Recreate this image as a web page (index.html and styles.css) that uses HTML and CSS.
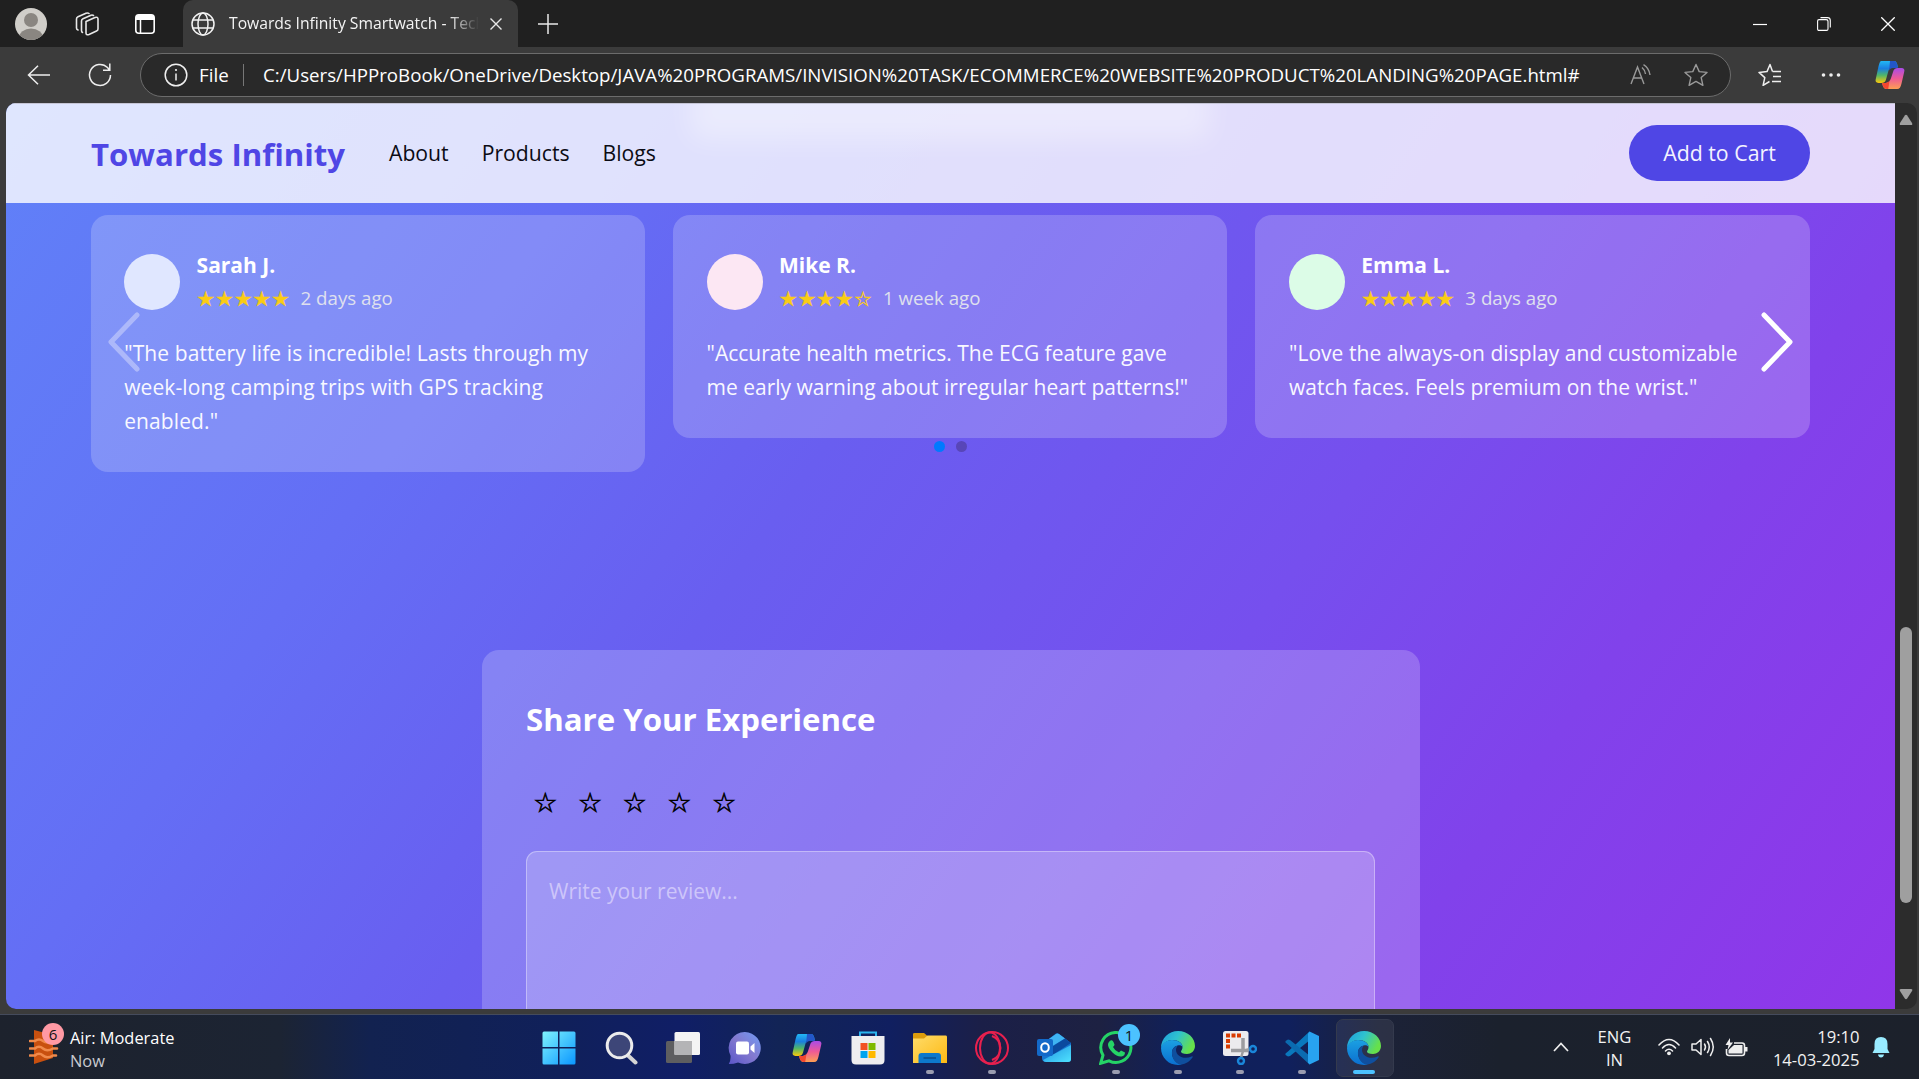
FILE: index.html
```html
<!DOCTYPE html>
<html lang="en">
<head>
<meta charset="utf-8">
<title>Towards Infinity Smartwatch</title>
<link rel="stylesheet" href="styles.css">
</head>
<body>
<svg class="defs" width="0" height="0">
  <defs>
    <linearGradient id="cpA" x1="0" y1="0" x2="0" y2="1"><stop offset="0" stop-color="#22b8f5"/><stop offset=".35" stop-color="#1a7fe0"/><stop offset=".65" stop-color="#4fb66a"/><stop offset="1" stop-color="#fbc90b"/></linearGradient>
    <linearGradient id="cpB" x1="0" y1="0" x2="0" y2="1"><stop offset="0" stop-color="#a94be8"/><stop offset=".5" stop-color="#ee5a96"/><stop offset="1" stop-color="#fda052"/></linearGradient>
    <linearGradient id="win" x1="0" y1="0" x2="1" y2="1"><stop offset="0" stop-color="#7ff3ff"/><stop offset="1" stop-color="#0a96ff"/></linearGradient>
    <linearGradient id="chat" x1="1" y1="0" x2="0" y2="1"><stop offset="0" stop-color="#6f9cf5"/><stop offset=".5" stop-color="#8379cf"/><stop offset="1" stop-color="#5a55c9"/></linearGradient>
    <linearGradient id="folder" x1="0" y1="0" x2="1" y2="1"><stop offset="0" stop-color="#ffdc6a"/><stop offset="1" stop-color="#fdb913"/></linearGradient>
    <linearGradient id="edgeTop" x1="0" y1="0" x2="1" y2=".4"><stop offset="0" stop-color="#1c9bde"/><stop offset=".5" stop-color="#2fc2cf"/><stop offset="1" stop-color="#66e04b"/></linearGradient>
    <linearGradient id="edgeLow" x1="0" y1="0" x2="0" y2="1"><stop offset="0" stop-color="#1ba0e2"/><stop offset="1" stop-color="#0b6fd0"/></linearGradient>
    <linearGradient id="ol" x1="0" y1="0" x2="1" y2="1"><stop offset="0" stop-color="#1f8fe0"/><stop offset="1" stop-color="#4fe3ff"/></linearGradient>
    <symbol id="copilot" viewBox="0 0 34 34">
      <path d="M7 1H21C24 1 25 3 26 8H20C17 8 16 10 15 13L12.500 22C11.500 25 10 26 7 26H4C1 26 0 24 1 21L4 7C5 3 6 1 7 1Z" fill="url(#cpA)"/>
      <path d="M17 1H21C24 1 25 3 26 9H20C18 9 17 10 16 12Z" fill="#2356c9"/>
      <path d="M26 9H30C33 9 34 11 33 14L30 27C29 31 28 33 25 33H14C10 33 9 30 8 26H12C15 26 17 24 18 21L21 12C22 10 23 9 26 9Z" fill="url(#cpB)"/>
      <path d="M8 26H12C14 26 15.500 25 16.500 23L15 33C11 33 9 31 8 26Z" fill="#f4472f"/>
    </symbol>
    <symbol id="edge" viewBox="0 0 34 34">
      <path d="M0 17C0 7 8 0 17 0C27 0 34 7 34 15C34 20 30 23 26 23C22 23 20 22 20 20.500C20 19.500 21.500 19 21.500 16C21.500 12 17 9 12 9C6 9 2 12 0 17Z" fill="url(#edgeTop)"/>
      <path d="M0 17C1 12 6 9 11 9C17 9 21.500 12 21.500 16C21 14.500 19 14 17.500 14.200C13 15 11 18 11 22C11 28 16 33 21 33.500C10 36 0 28 0 17Z" fill="url(#edgeLow)"/>
      <path d="M17 14.500C13 15.500 10.500 18.500 11 23C11.500 29 16 33.500 20 33.600C25 33 29 30 31.500 26.500C32 25.500 31.500 25 30.500 25.500C23 29 15 25 15 19C15 17 16 15.500 17 14.500Z" fill="#0f4f9e"/>
    </symbol>
  </defs>
</svg>

<div class="screen">
  <div class="tabstrip">
    <div class="tab-tools">
      <svg class="avatar-ico" viewBox="0 0 32 32"><clipPath id="av"><circle cx="16" cy="16" r="16"/></clipPath><g clip-path="url(#av)"><rect width="32" height="32" fill="#d0cec9"/><circle cx="16" cy="12" r="7" fill="#8a8681"/><ellipse cx="16" cy="30" rx="12" ry="9.500" fill="#8a8681"/></g></svg>
      <svg class="ico24" viewBox="0 0 24 24"><g fill="none" stroke="#e8e8e8" stroke-width="1.600" stroke-linejoin="round" stroke-linecap="round"><path d="M11 9.500L20 5.500Q23 4.500 23 7V17Q23 18.500 21.500 19L14 22.500Q11 23.500 11 21Z"/><path d="M7.500 20.500Q6.500 20 6.500 18.500V9Q6.500 7.500 8 6.800L16 3.200Q17.500 2.800 18.500 3.500"/><path d="M3 18Q1.500 17.500 1.500 16V7Q1.500 5.500 3 4.800L11 1.300Q13 .7 14 1.500"/></g></svg>
      <svg class="ico20" viewBox="0 0 20 20"><rect x=".8" y=".8" width="18.400" height="18.400" rx="3" fill="none" stroke="#fff" stroke-width="1.600"/><path d="M1 3Q1 1 3 1H17Q19 1 19 3V6H1Z" fill="#fff"/><path d="M5.500 6V19" stroke="#fff" stroke-width="1.500"/></svg>
    </div>
    <div class="tab">
      <svg class="globe" viewBox="0 0 24 24"><g fill="none" stroke="#f2f2f2" stroke-width="1.500"><circle cx="12" cy="12" r="11"/><ellipse cx="12" cy="12" rx="5" ry="11"/><path d="M2 8H22M2 16H22"/></g></svg>
      <span class="tab-title">Towards Infinity Smartwatch - Tech</span>
      <svg class="ico12" viewBox="0 0 12 12"><path d="M.5 .5L11.500 11.500M11.500 .5L.5 11.500" stroke="#e8e8e8" stroke-width="1.400"/></svg>
    </div>
    <svg class="ico20 plus" viewBox="0 0 20 20"><path d="M10 0V20M0 10H20" stroke="#e8e8e8" stroke-width="1.500"/></svg>
    <div class="win-controls">
      <svg viewBox="0 0 14 14"><path d="M0 7.500H14" stroke="#fff" stroke-width="1.200"/></svg>
      <svg viewBox="0 0 14 14"><path d="M.6 4Q.6 2.600 2 2.600H9Q11 2.600 11 4.500V12Q11 13.400 9.600 13.400H2Q.6 13.400 .6 12Z" fill="none" stroke="#fff" stroke-width="1.100"/><path d="M3.500 .6H10.500Q13.300 .6 13.300 3.500V10.500" fill="none" stroke="#fff" stroke-width="1.100"/></svg>
      <svg viewBox="0 0 14 14"><path d="M.3 .3L13.700 13.700M13.700 .3L.3 13.700" stroke="#fff" stroke-width="1.300"/></svg>
    </div>
  </div>

  <div class="toolbar">
    <svg class="back" viewBox="0 0 24 20"><path d="M23 10H1.500M11 .7L1.500 10L11 19.300" fill="none" stroke="#eee" stroke-width="1.500"/></svg>
    <svg class="reload" viewBox="0 0 24 24"><path d="M22.500 12A10.500 10.500 0 1 1 19.500 4.600L21.500 7M21.800 .5V7.200H15" fill="none" stroke="#eee" stroke-width="1.500"/></svg>
    <div class="urlbar">
      <svg class="ico24" viewBox="0 0 24 24"><circle cx="12" cy="12" r="10.800" fill="none" stroke="#eee" stroke-width="1.500"/><path d="M12 10.500V17.500" stroke="#eee" stroke-width="1.500"/><circle cx="12" cy="7" r="1.100" fill="#eee"/></svg>
      <span class="file">File</span>
      <span class="sep"></span>
      <span class="url">C:/Users/HPProBook/OneDrive/Desktop/JAVA%20PROGRAMS/INVISION%20TASK/ECOMMERCE%20WEBSITE%20PRODUCT%20LANDING%20PAGE.html#</span>
      <svg class="aloud" viewBox="0 0 22 22"><g fill="none" stroke="#9a9a9a" stroke-width="1.400"><path d="M1 20L7.500 3L14 20M3.300 14H11.700"/><path d="M12 3.500Q15 6 15.500 10"/><path d="M13.500 .7Q19 4 20 11"/></g></svg>
      <svg class="ico24" viewBox="0 0 24 24"><path d="M12 1.500L15.200 8.600L23 9.400L17.200 14.600L18.900 22.300L12 18.400L5.100 22.300L6.800 14.600L1 9.400L8.800 8.600Z" fill="none" stroke="#9a9a9a" stroke-width="1.400" stroke-linejoin="round"/></svg>
    </div>
    <svg class="ico24 fav" viewBox="0 0 24 24"><path d="M14.500 8.500L12 1.500L9 8.600L1 9.400L6.800 14.600L5.100 22.300L11.500 18.500M14.500 8.500H23M15 13.500H23M14 18.500H23" fill="none" stroke="#eee" stroke-width="1.500" stroke-linejoin="round"/></svg>
    <svg class="dots3" viewBox="0 0 20 6"><g fill="#eee"><circle cx="2.500" cy="3" r="1.800"/><circle cx="10" cy="3" r="1.800"/><circle cx="17.500" cy="3" r="1.800"/></g></svg>
    <svg class="copilot-top"><use href="#copilot"/></svg>
  </div>

  <div class="viewport">
    <div class="page">
      <header class="nav">
        <div class="ghost"></div>
        <span class="brand">Towards Infinity</span>
        <nav class="links"><a>About</a><a>Products</a><a>Blogs</a></nav>
        <button class="cart">Add to Cart</button>
      </header>
      <section class="reviews">
        <article class="card">
          <div class="who"><span class="face indigo"></span><div><h4>Sarah J.</h4><p class="meta"><span class="stars">★★★★★</span><span class="when">2 days ago</span></p></div></div>
          <p class="quote loose">"The battery life is incredible! Lasts through my<br>week-long camping trips with GPS tracking<br>enabled."</p>
        </article>
        <article class="card">
          <div class="who"><span class="face pink"></span><div><h4>Mike R.</h4><p class="meta"><span class="stars">★★★★☆</span><span class="when">1 week ago</span></p></div></div>
          <p class="quote">"Accurate health metrics. The ECG feature gave<br>me early warning about irregular heart patterns!"</p>
        </article>
        <article class="card">
          <div class="who"><span class="face green"></span><div><h4>Emma L.</h4><p class="meta"><span class="stars">★★★★★</span><span class="when">3 days ago</span></p></div></div>
          <p class="quote semi">"Love the always-on display and customizable<br>watch faces. Feels premium on the wrist."</p>
        </article>
        <svg class="arrow prev" viewBox="0 0 32 60"><path d="M29 3L3 30L29 57"/></svg>
        <svg class="arrow next" viewBox="0 0 32 60"><path d="M3 3L29 30L3 57"/></svg>
        <div class="bullets"><i class="on"></i><i></i></div>
      </section>
      <section class="form">
        <h3>Share Your Experience</h3>
        <div class="rate"><span>☆</span><span>☆</span><span>☆</span><span>☆</span><span>☆</span></div>
        <div class="area">Write your review...</div>
      </section>
    </div>
    <div class="scroll">
      <svg viewBox="0 0 14 12"><path d="M5.800 1.500Q7 0 8.200 1.500L13 9Q14 11 12 11H2Q0 11 1 9Z" fill="#a0a0a0"/></svg>
      <span class="thumb"></span>
      <svg viewBox="0 0 14 12"><path d="M5.800 10.500Q7 12 8.200 10.500L13 3Q14 1 12 1H2Q0 1 1 3Z" fill="#a0a0a0"/></svg>
    </div>
  </div>

  <div class="taskbar">
    <div class="widget">
      <div class="air">
        <svg viewBox="0 0 30 34"><path d="M5 0L24 5V28L5 34Z" fill="#c8500f"/><g fill="none" stroke="#f08a4b" stroke-width="2.600" stroke-linecap="round"><path d="M1 11H6Q10 8 14 11T24 11H27"/><path d="M1 18.500H6Q10 15 14 18.500T24 18.500H28"/><path d="M1 25.500H6Q10 22 14 25.500T24 25.500H27"/></g></svg>
        <span class="num">6</span>
      </div>
      <div class="air-text"><span>Air: Moderate</span><span class="dim">Now</span></div>
    </div>
    <div class="apps">
      <div class="app"><svg viewBox="0 0 34 34"><path d="M2 .5H16V16H.5V2Q.5 .5 2 .5ZM17.500 .5H32Q33.500 .5 33.500 2V16H17.500ZM.5 17.500H16V33.500H2Q.5 33.500 .5 32ZM17.500 17.500H33.500V32Q33.500 33.500 32 33.500H17.500Z" fill="url(#win)"/></svg></div>
      <div class="app"><svg viewBox="0 0 34 34"><path d="M23.500 24L31.500 31.500" stroke="#d5d5d5" stroke-width="4" stroke-linecap="round"/><circle cx="15.500" cy="14.500" r="12.300" fill="#3d4678" stroke="#ececec" stroke-width="3"/></svg></div>
      <div class="app"><svg viewBox="0 0 34 34"><rect x="0" y="10" width="26" height="22" rx="1.500" fill="#5e5e60"/><rect x="8.500" y="1" width="25.500" height="23" rx="1.500" fill="#f4f4f4"/><path d="M8.500 10H26V24H8.500Z" fill="#b4b4b6"/></svg></div>
      <div class="app"><svg viewBox="0 0 34 34"><path d="M17 1A16 16 0 1 1 10 31.500Q6 33 .8 33Q3 29 2.500 24.500A16 16 0 0 1 17 1Z" fill="url(#chat)"/><rect x="8" y="10.500" width="13" height="13" rx="2" fill="#fff"/><path d="M22.500 15.500L26.500 12V22L22.500 18.500Z" fill="#fff"/></svg></div>
      <div class="app"><svg class="cp"><use href="#copilot"/></svg></div>
      <div class="app"><svg viewBox="0 0 34 34"><path d="M9 7V1.500H25V7" fill="none" stroke="#2bb5ef" stroke-width="2"/><path d="M.5 5H33.500V29Q33.500 33.500 29 33.500H5Q.5 33.500 .5 29Z" fill="#eeedf0"/><path d="M9.500 12H16.500V19H9.500Z" fill="#f25022"/><path d="M17.500 12H24.500V19H17.500Z" fill="#7fba00"/><path d="M9.500 20H16.500V27H9.500Z" fill="#00a4ef"/><path d="M17.500 20H24.500V27H17.500Z" fill="#ffb900"/></svg></div>
      <div class="app run"><svg viewBox="0 0 34 34"><path d="M0 3Q0 2 1.500 2H11L14.500 5V12H0Z" fill="#dd9c0c"/><path d="M0 7.500H11L14.500 4.500H33Q34 4.500 34 6V32H0Z" fill="url(#folder)"/><path d="M5.500 32V25Q5.500 22 8.500 22H25Q28 22 28 25V32Z" fill="#0d78cc"/><path d="M10.500 27H23" stroke="#0b4f8f" stroke-width="1.500"/></svg></div>
      <div class="app run"><svg viewBox="0 0 34 34"><g fill="none" stroke="#e8204e" stroke-width="2"><circle cx="17" cy="17" r="16"/><ellipse cx="15" cy="17" rx="10" ry="15.500"/><path d="M17 5Q25 8 25.500 17Q25 26 17 29"/></g></svg></div>
      <div class="app"><svg viewBox="0 0 34 34"><path d="M5 13L19 2.500Q20.500 2 22 3L34 12V28Q34 31 31 31H9Q5 31 5 27Z" fill="#1674cf"/><path d="M12 8L19 3Q20.500 2 22 3L28 7.500L12 17Z" fill="#3fb4f2"/><path d="M10 19L28 7.500L34 12L14 25Z" fill="#0b4a9f"/><path d="M34 14V28Q34 31 31 31H9Q7 31 6 29Z" fill="url(#ol)"/><rect x="0" y="8" width="16" height="17" rx="2" fill="#1369c9"/><ellipse cx="8" cy="16.500" rx="3.800" ry="4.300" fill="none" stroke="#fff" stroke-width="2"/></svg></div>
      <div class="app run"><svg viewBox="0 0 34 34"><path d="M17.500 1.500A15 15 0 1 1 10 29.800L1.700 32.300L4 24.200A15 15 0 0 1 17.500 1.500Z" fill="none" stroke="#25d366" stroke-width="3"/><path d="M11.500 9.500Q13.500 8.500 14.500 11L15.500 13.500Q15.500 14.500 14 16Q16 20 20 21.500L22 19.500L26 21.500Q26 25 22.500 25.500Q18 26 13.500 21.500Q8.500 16.500 9 13Q9.500 10.500 11.500 9.500Z" fill="#25d366"/></svg><span class="count">1</span></div>
      <div class="app run"><svg><use href="#edge"/></svg></div>
      <div class="app run"><svg viewBox="0 0 34 34"><rect x="0" y="0" width="25.500" height="25" rx="2.500" fill="#ecebee"/><path d="M3 2.500H7V6.500H3ZM8.500 2.500H12.500V6.500H8.500ZM14 2.500H18V6.500H14ZM3 8H7V12H3ZM3 13.500H7V17.500H3Z" fill="#d83b01"/><path d="M20 7V20M8 19.500H25" stroke="#9c9ca0" stroke-width="3.500"/><path d="M20 20L18 27M22 19.500L27 18" stroke="#9c9ca0" stroke-width="2.500"/><circle cx="18" cy="30" r="3" fill="none" stroke="#1a86d9" stroke-width="2.400"/><circle cx="30" cy="18" r="3" fill="none" stroke="#1a86d9" stroke-width="2.400"/></svg></div>
      <div class="app run"><svg viewBox="0 0 34 34"><path d="M24.500 .5L3.500 20L.5 22.500V24L3 25.500L5 25L25 9Z" fill="#0a78bd"/><path d="M24.500 33.500L3.500 14L.5 11.500V10L3 8.500L5 9L25 25Z" fill="#0b6bb0"/><path d="M24.500 .5L34 5V29L24.500 33.500L23 31.500V2.500Z" fill="#28a3f0"/></svg></div>
      <div class="app run active"><svg><use href="#edge"/></svg></div>
    </div>
    <div class="tray">
      <svg class="chev" viewBox="0 0 16 10"><path d="M1 9L8 1.500L15 9" fill="none" stroke="#eee" stroke-width="1.700"/></svg>
      <div class="lang"><span>ENG</span><span>IN</span></div>
      <svg class="wifi" viewBox="0 0 22 18"><g fill="none" stroke="#eee" stroke-width="1.600" stroke-linecap="round"><path d="M1 7Q11 -4 21 7"/><path d="M4.500 10Q11 3 17.500 10"/><path d="M7.500 13Q11 9.500 14.500 13"/></g><circle cx="11" cy="15.300" r="1.900" fill="#eee"/></svg>
      <svg class="sound" viewBox="0 0 24 20"><g fill="none" stroke="#eee" stroke-width="1.500" stroke-linecap="round" stroke-linejoin="round"><path d="M1 7H5L10 2.500V17.500L5 13H1Z"/><path d="M13.500 7Q15.500 10 13.500 13"/><path d="M16.500 4.500Q20 10 16.500 15.500"/><path d="M19.500 1.500Q25 10 19.500 18.500"/></g></svg>
      <svg class="batt" viewBox="0 0 23 19"><path d="M9 5H17Q19.500 5 19.500 7.500V15Q19.500 17.500 17 17.500H4Q1.500 17.500 1.500 15V11" fill="none" stroke="#eee" stroke-width="1.600"/><path d="M9 7H17.500V15.500H3.500V12Z" fill="#eee"/><path d="M20 9H22.500V13.500H20Z" fill="#eee"/><path d="M5 0L.5 7H3.500L2.500 12L8 4.500H5Z" fill="#eee"/></svg>
      <div class="clock"><span>19:10</span><span>14-03-2025</span></div>
      <svg class="bell" viewBox="0 0 18 21"><path d="M9 0Q15.500 0 15.500 7V12L17.500 16H.5L2.500 12V7Q2.500 0 9 0ZM6 17.500H12Q11.500 20.500 9 20.500Q6.500 20.500 6 17.500Z" fill="#99ebff"/></svg>
    </div>
  </div>
</div>
</body>
</html>
```
FILE: styles.css
```css
* { box-sizing: border-box; margin: 0; padding: 0; }
body { width: 1919px; height: 1079px; overflow: hidden; font-family: "Open Sans", "Noto Sans", sans-serif; background: #3b3b3b; }
svg { display: block; flex: none; }
.defs { position: absolute; }
.screen { display: grid; grid-template-rows: 47px 56px 906px 70px; width: 1919px; height: 1079px; }

/* Tab strip */
.tabstrip { display: flex; align-items: center; background: #202020; }
.tab-tools { display: flex; align-items: center; width: 183px; padding-left: 15px; gap: 28px; }
.avatar-ico { width: 32px; height: 32px; }
.ico24 { width: 24px; height: 24px; }
.ico20 { width: 20px; height: 20px; }
.ico12 { width: 12px; height: 12px; }
.tab-tools .ico20 { margin-left: 8px; }
.tab { display: flex; align-items: center; width: 335px; height: 47px; padding: 0 16px 0 8px; background: #3b3b3b; border-radius: 10px 10px 0 0; }
.globe { width: 24px; height: 24px; }
.tab-title { width: 250px; margin: -2px 11px 0 14px; overflow: hidden; white-space: nowrap; font-size: 15.700px; color: #f4f4f4; -webkit-mask-image: linear-gradient(90deg, #000 88%, transparent); mask-image: linear-gradient(90deg, #000 88%, transparent); }
.plus { margin-left: 20px; }
.win-controls { display: flex; gap: 50px; margin-left: auto; padding-right: 24px; }
.win-controls svg { width: 14px; height: 14px; }

/* Address row */
.toolbar { display: flex; align-items: center; padding-left: 27px; background: #3b3b3b; }
.back { width: 24px; height: 20px; }
.reload { width: 24px; height: 24px; margin-left: 37px; }
.urlbar { display: flex; align-items: center; width: 1591px; height: 44px; margin-left: 28px; padding-left: 23px; background: #292929; border: 1px solid #6c6c6c; border-radius: 22px; color: #fff; white-space: nowrap; }
.file { width: 44px; margin-left: 11px; font-size: 18.800px; }
.sep { width: 1px; height: 22px; background: #777; }
.url { width: 1367px; margin: -2px 0 0 19px; font-size: 18.700px; }
.aloud { width: 22px; height: 22px; }
.urlbar .aloud + .ico24 { margin-left: 32px; }
.fav { margin-left: 27px; }
.dots3 { width: 20px; height: 6px; margin-left: 39px; }
.copilot-top { width: 32px; height: 30px; margin-left: 33px; }

/* Page */
.viewport { display: flex; margin: 0 2px 0 6px; border-radius: 10px; overflow: hidden; background: #2c2c2c; }
.page { width: 1889px; height: 906px; background: linear-gradient(125deg, #6081f8 0%, #646ef5 25%, #695ef0 42%, #764fee 64%, #8142eb 79%, #9036e9 100%); }
.nav { position: relative; display: flex; align-items: center; height: 100px; padding: 0 85px 2px; background: rgba(255, 255, 255, .8); border-top: 1px solid #c5c5d5; overflow: hidden; }
.ghost { position: absolute; left: 684px; top: -20px; width: 520px; height: 56px; background: rgba(255, 255, 255, .34); border-radius: 12px; filter: blur(13px); }
.brand { width: 298px; padding-top: 3px; font-size: 31.200px; font-weight: 700; color: #4f46e5; white-space: nowrap; }
.links { display: flex; gap: 33px; font-size: 21.200px; color: #0b0b14; }
.cart { width: 181px; height: 56px; margin-left: auto; border: 0; border-radius: 28px; background: #4f46e5; color: #f3f3ff; font: 21.300px "Open Sans", sans-serif; }
.reviews { position: relative; display: grid; grid-template-columns: repeat(3, 554.400px); align-items: start; gap: 28px; height: 447px; padding: 12px 84.600px 0; }
.card { padding: 33.600px; border-radius: 17px; background: rgba(255, 255, 255, .2); color: #fff; }
.who { display: flex; align-items: center; gap: 16.400px; height: 66.400px; margin-bottom: 22.400px; }
.face { width: 56px; height: 56px; border-radius: 50%; }
.indigo { background: #e0e7ff; }
.pink { background: #fce7f3; }
.green { background: #dcfce7; }
h4 { height: 33.600px; line-height: 33.600px; font-size: 21px; }
.meta { display: flex; align-items: center; height: 32px; }
.stars { width: 104px; padding-top: 1px; font: 20.500px/32px "DejaVu Sans", sans-serif; color: #facc15; letter-spacing: .3px; -webkit-text-stroke: .4px #facc15; }
.when { padding-bottom: 2px; font-size: 18.700px; color: #dfe0ee; white-space: nowrap; }
.quote { font-size: 21px; line-height: 33.600px; white-space: nowrap; color: #f8f8ff; }
.loose { letter-spacing: .1px; }
.semi { letter-spacing: .05px; }
.arrow { position: absolute; top: 109px; width: 32px; height: 60px; fill: none; stroke: #fff; stroke-width: 5; stroke-linecap: round; stroke-linejoin: round; }
.prev { left: 102px; opacity: .35; }
.next { left: 1755px; }
.bullets { position: absolute; left: 928px; top: 238px; display: flex; gap: 11px; }
.bullets i { width: 11px; height: 11px; border-radius: 50%; background: #5846b8; }
.bullets .on { background: #007aff; }
.form { width: 938px; height: 359px; margin-left: 476px; padding: 45px 45px 0 44px; border-radius: 17px 17px 0 0; background: rgba(255, 255, 255, .2); overflow: hidden; }
h3 { height: 48px; line-height: 48px; font-size: 31.200px; color: #fff; white-space: nowrap; }
.rate { display: flex; height: 76px; margin: 32px 0 0 -3px; font: 27px/56px "DejaVu Sans", sans-serif; color: #000; -webkit-text-stroke: .6px #000; }
.rate span { width: 44.700px; text-align: center; }
.area { width: 849px; height: 200px; padding: 22px; border: 1px solid rgba(255, 255, 255, .35); border-radius: 11px; background: rgba(255, 255, 255, .2); font-size: 21px; line-height: 34px; color: #cdc5fa; }
.scroll { display: flex; flex-direction: column; align-items: center; width: 22px; padding: 11px 1px 9px 0; }
.scroll svg { width: 14px; height: 12px; }
.thumb { width: 12px; height: 276px; margin: 501px 0 auto; border-radius: 6px; background: #9f9f9f; }

/* Taskbar */
.taskbar { display: flex; align-items: stretch; margin-top: 5px; border-top: 1px solid #454b5c; background: linear-gradient(90deg, #1d222d 0, #1c2433 280px, #122250 370px, #10205a 560px, #101e66 680px, #122456 780px, #101f60 890px, #1b1f48 980px, #1d2142 1100px, #10205a 1180px, #10205c 1290px, #1c2238 1380px, #1b212d 1500px, #1c212b 100%); }
.widget { display: flex; width: 528px; padding-left: 29px; }
.air { position: relative; width: 41px; padding-top: 15px; }
.air svg { width: 30px; height: 34px; }
.num { position: absolute; left: 13px; top: 8px; width: 22px; height: 22px; border-radius: 50%; background: #ff99a4; color: #111; font-size: 15px; line-height: 22px; text-align: center; }
.air-text { display: flex; flex-direction: column; padding-top: 11px; font-size: 16.400px; line-height: 23px; color: #fff; white-space: nowrap; }
.dim { color: #c8cad0; }
.apps { display: flex; }
.app { position: relative; display: flex; justify-content: center; width: 61.900px; padding-top: 16px; }
.app svg { width: 34px; height: 34px; }
.app .cp { width: 32px; height: 30px; margin-top: 2px; }
.run::after { content: ""; position: absolute; left: 27px; top: 55px; width: 8px; height: 4px; border-radius: 2px; background: #9a9cb0; }
.active::before { content: ""; position: absolute; left: 3px; top: 4px; width: 56px; height: 56px; border: 1px solid #343a4d; border-radius: 7px; background: rgba(255, 255, 255, .07); }
.active svg { position: relative; }
.active::after { left: 20px; width: 22px; background: #4cc2ff; }
.count { position: absolute; left: 33px; top: 9px; width: 22px; height: 22px; border-radius: 50%; background: #4cc2ff; color: #111; font-size: 15px; line-height: 22px; text-align: center; }
.tray { display: flex; align-items: center; flex: 1; padding-left: 159px; font-size: 16.600px; line-height: 23px; color: #f2f2f2; }
.lang, .clock { display: flex; flex-direction: column; padding-top: 2px; text-align: center; }
.chev { width: 16px; height: 10px; }
.lang { width: 48px; margin-left: 21px; }
.wifi { width: 22px; height: 18px; margin-left: 20px; }
.sound { width: 24px; height: 20px; margin-left: 11px; }
.batt { width: 23px; height: 19px; margin-left: 10px; }
.clock { width: 100px; margin-left: 11px; text-align: right; }
.bell { width: 18px; height: 21px; margin-left: 13px; }
```
